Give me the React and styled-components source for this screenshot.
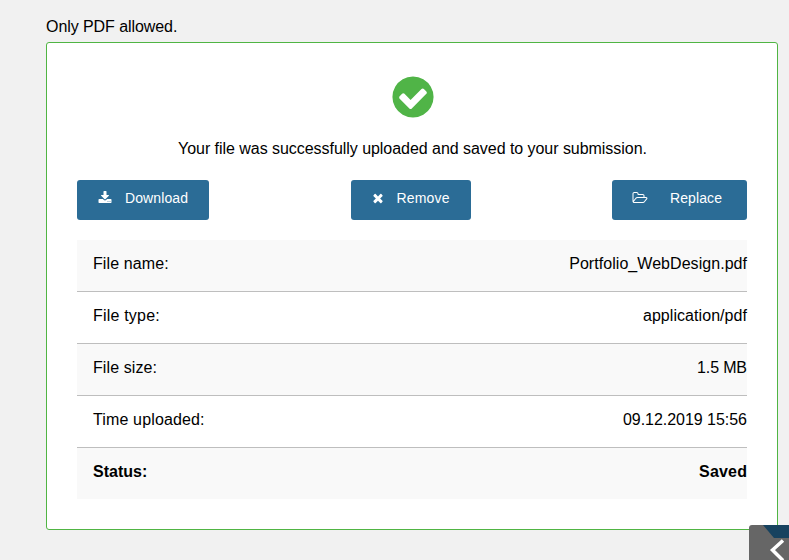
import React from 'react';
import styled, { createGlobalStyle } from 'styled-components';

const GlobalStyle = createGlobalStyle`
  * { box-sizing: border-box; }
  body {
    margin: 0;
    background: #f1f1f1;
    color: #000;
    font: 16px/24px 'Liberation Sans', Arial, sans-serif;
    overflow: hidden;
  }
`;

const Page = styled.main`
  height: 560px;
  padding: 14px 11px 0 46px;
`;

const Hint = styled.p`
  margin: 0;
  height: 28px;
  line-height: 25px;
`;

const Line = styled.span`
  display: inline-block;
  white-space: nowrap;
  letter-spacing: ${(p) => p.$spacing || 0}px;
  margin-right: ${(p) => -(p.$spacing || 0)}px;
`;

const Card = styled.section`
  height: 488px;
  padding: 33px 30px 0;
  background: #fff;
  border: 1px solid #50b543;
  border-radius: 3px;
  display: flex;
  flex-direction: column;
`;

const SuccessIcon = styled.svg`
  width: 48px;
  height: 48px;
  margin: -3px 0 0 1px;
  align-self: center;
  fill: #50b447;
  flex: none;
`;

const Message = styled.p`
  margin: 16px 0 19px 1px;
  text-align: center;
`;

const Actions = styled.div`
  display: flex;
  justify-content: space-between;
  margin-bottom: 20px;
`;

const Button = styled.button`
  display: flex;
  align-items: center;
  width: ${(p) => p.$width}px;
  height: 40px;
  padding: 0 0 4px ${(p) => p.$inset}px;
  gap: ${(p) => p.$gap}px;
  border: 0;
  border-radius: 3px;
  background: #2b6c96;
  color: #fff;
  font: 14px/20px 'Liberation Sans', Arial, sans-serif;
`;

const ButtonIcon = styled.svg`
  width: ${(p) => p.$width || 14}px;
  height: 14px;
  fill: currentColor;
  flex: none;
`;

const Details = styled.dl`
  margin: 0;
`;

const Row = styled.div`
  display: flex;
  justify-content: space-between;
  height: 52px;
  padding: 12px 0 0 16px;
  border-bottom: 1px solid #bebebe;
  &:nth-child(odd) { background: #f9f9f9; }
  &:last-child {
    height: 51px;
    border-bottom: 0;
    font-weight: bold;
  }
`;

const Term = styled.dt``;

const Value = styled.dd`
  margin: 0;
`;

const Drawer = styled.div`
  position: fixed;
  right: 0;
  bottom: 0;
  width: 40px;
  height: 35px;
  background: #666;
  border-top-left-radius: 3px;
  overflow: hidden;
  svg { display: block; }
`;

const icons = {
  check: 'M1412 734q0-28-18-46l-91-90q-19-19-45-19t-45 19l-408 407-226-226q-19-19-45-19t-45 19l-91 90q-18 18-18 46 0 27 18 45l362 362q19 19 45 19 27 0 46-19l543-543q18-18 18-45zm252 162q0 209-103 385.5t-279.5 279.5-385.5 103-385.5-103-279.5-279.5-103-385.5 103-385.5 279.5-279.5 385.5-103 385.5 103 279.5 279.5 103 385.5z',
  download: 'M1344 1344q0-26-19-45t-45-19-45 19-19 45 19 45 45 19 45-19 19-45zm256 0q0-26-19-45t-45-19-45 19-19 45 19 45 45 19 45-19 19-45zm128-224v320q0 40-28 68t-68 28h-1472q-40 0-68-28t-28-68v-320q0-40 28-68t68-28h465l135 136q58 56 136 56t136-56l136-136h464q40 0 68 28t28 68zm-325-569q17 41-14 70l-448 448q-18 19-45 19t-45-19l-448-448q-31-29-14-70 17-39 59-39h256v-448q0-26 19-45t45-19h256q26 0 45 19t19 45v448h256q42 0 59 39z',
  remove: 'M1490 1322q0 40-28 68l-136 136q-28 28-68 28t-68-28l-294-294-294 294q-28 28-68 28t-68-28l-136-136q-28-28-28-68t28-68l294-294-294-294q-28-28-28-68t28-68l136-136q28-28 68-28t68 28l294 294 294-294q28-28 68-28t68 28l136 136q28 28 28 68t-28 68l-294 294 294 294q28 28 28 68z',
  folder: 'M1845 931q0-35-53-35h-1088q-40 0-85.500 21.500t-71.500 52.500l-294 363q-18 24-18 40 0 35 53 35h1088q40 0 86-22t71-53l294-363q18-22 18-39zm-1141-163h768v-160q0-40-28-68t-68-28h-576q-40 0-68-28t-28-68v-64q0-40-28-68t-68-28h-320q-40 0-68 28t-28 68v853l256-315q44-53 116-87.500t140-34.500zm1269 163q0 62-46 120l-295 363q-43 53-116 87.500t-140 34.500h-1088q-92 0-158-66t-66-158v-960q0-92 66-158t158-66h320q92 0 158 66t66 158v32h544q92 0 158 66t66 158v160h192q54 0 99 24.500t67 70.500q15 32 15 68z',
};

const rows = [
  { term: 'File name:', termSpacing: 0.1, value: 'Portfolio_WebDesign.pdf', valueSpacing: 0.05 },
  { term: 'File type:', termSpacing: 0.2, value: 'application/pdf', valueSpacing: 0.06 },
  { term: 'File size:', termSpacing: 0.1, value: '1.5 MB', valueSpacing: -0.16 },
  { term: 'Time uploaded:', termSpacing: 0.14, value: '09.12.2019 15:56', valueSpacing: -0.03 },
  { term: 'Status:', value: 'Saved', valueSpacing: 0.2 },
];

export default function App() {
  return (
    <>
      <GlobalStyle />
      <Page>
        <Hint><Line $spacing={-0.07}>Only PDF allowed.</Line></Hint>
        <Card>
          <SuccessIcon viewBox="0 0 1792 1792"><path d={icons.check} /></SuccessIcon>
          <Message><Line $spacing={-0.043}>Your file was successfully uploaded and saved to your submission.</Line></Message>
          <Actions>
            <Button $width={132} $inset={20.5} $gap={13.5}>
              <ButtonIcon viewBox="0 0 1792 1792"><path d={icons.download} /></ButtonIcon>
              <Line $spacing={0.1}>Download</Line>
            </Button>
            <Button $width={120} $inset={20} $gap={12}>
              <ButtonIcon viewBox="0 0 1792 1792"><path d={icons.remove} /></ButtonIcon>
              <Line $spacing={0.16}>Remove</Line>
            </Button>
            <Button $width={135} $inset={20} $gap={22}>
              <ButtonIcon $width={16} viewBox="0 0 2048 1792"><path d={icons.folder} /></ButtonIcon>
              <Line $spacing={0.1}>Replace</Line>
            </Button>
          </Actions>
          <Details>
            {rows.map((r) => (
              <Row key={r.term}>
                <Term><Line $spacing={r.termSpacing}>{r.term}</Line></Term>
                <Value><Line $spacing={r.valueSpacing}>{r.value}</Line></Value>
              </Row>
            ))}
          </Details>
        </Card>
      </Page>
      <Drawer>
        <svg width="40" height="35" viewBox="0 0 40 35">
          <path d="M14 0H40V13H25Z" fill="#17425f" />
          <path d="M34 15.500L23.500 25L34 35.500" fill="none" stroke="#fff" strokeWidth="3.500" />
        </svg>
      </Drawer>
    </>
  );
}
